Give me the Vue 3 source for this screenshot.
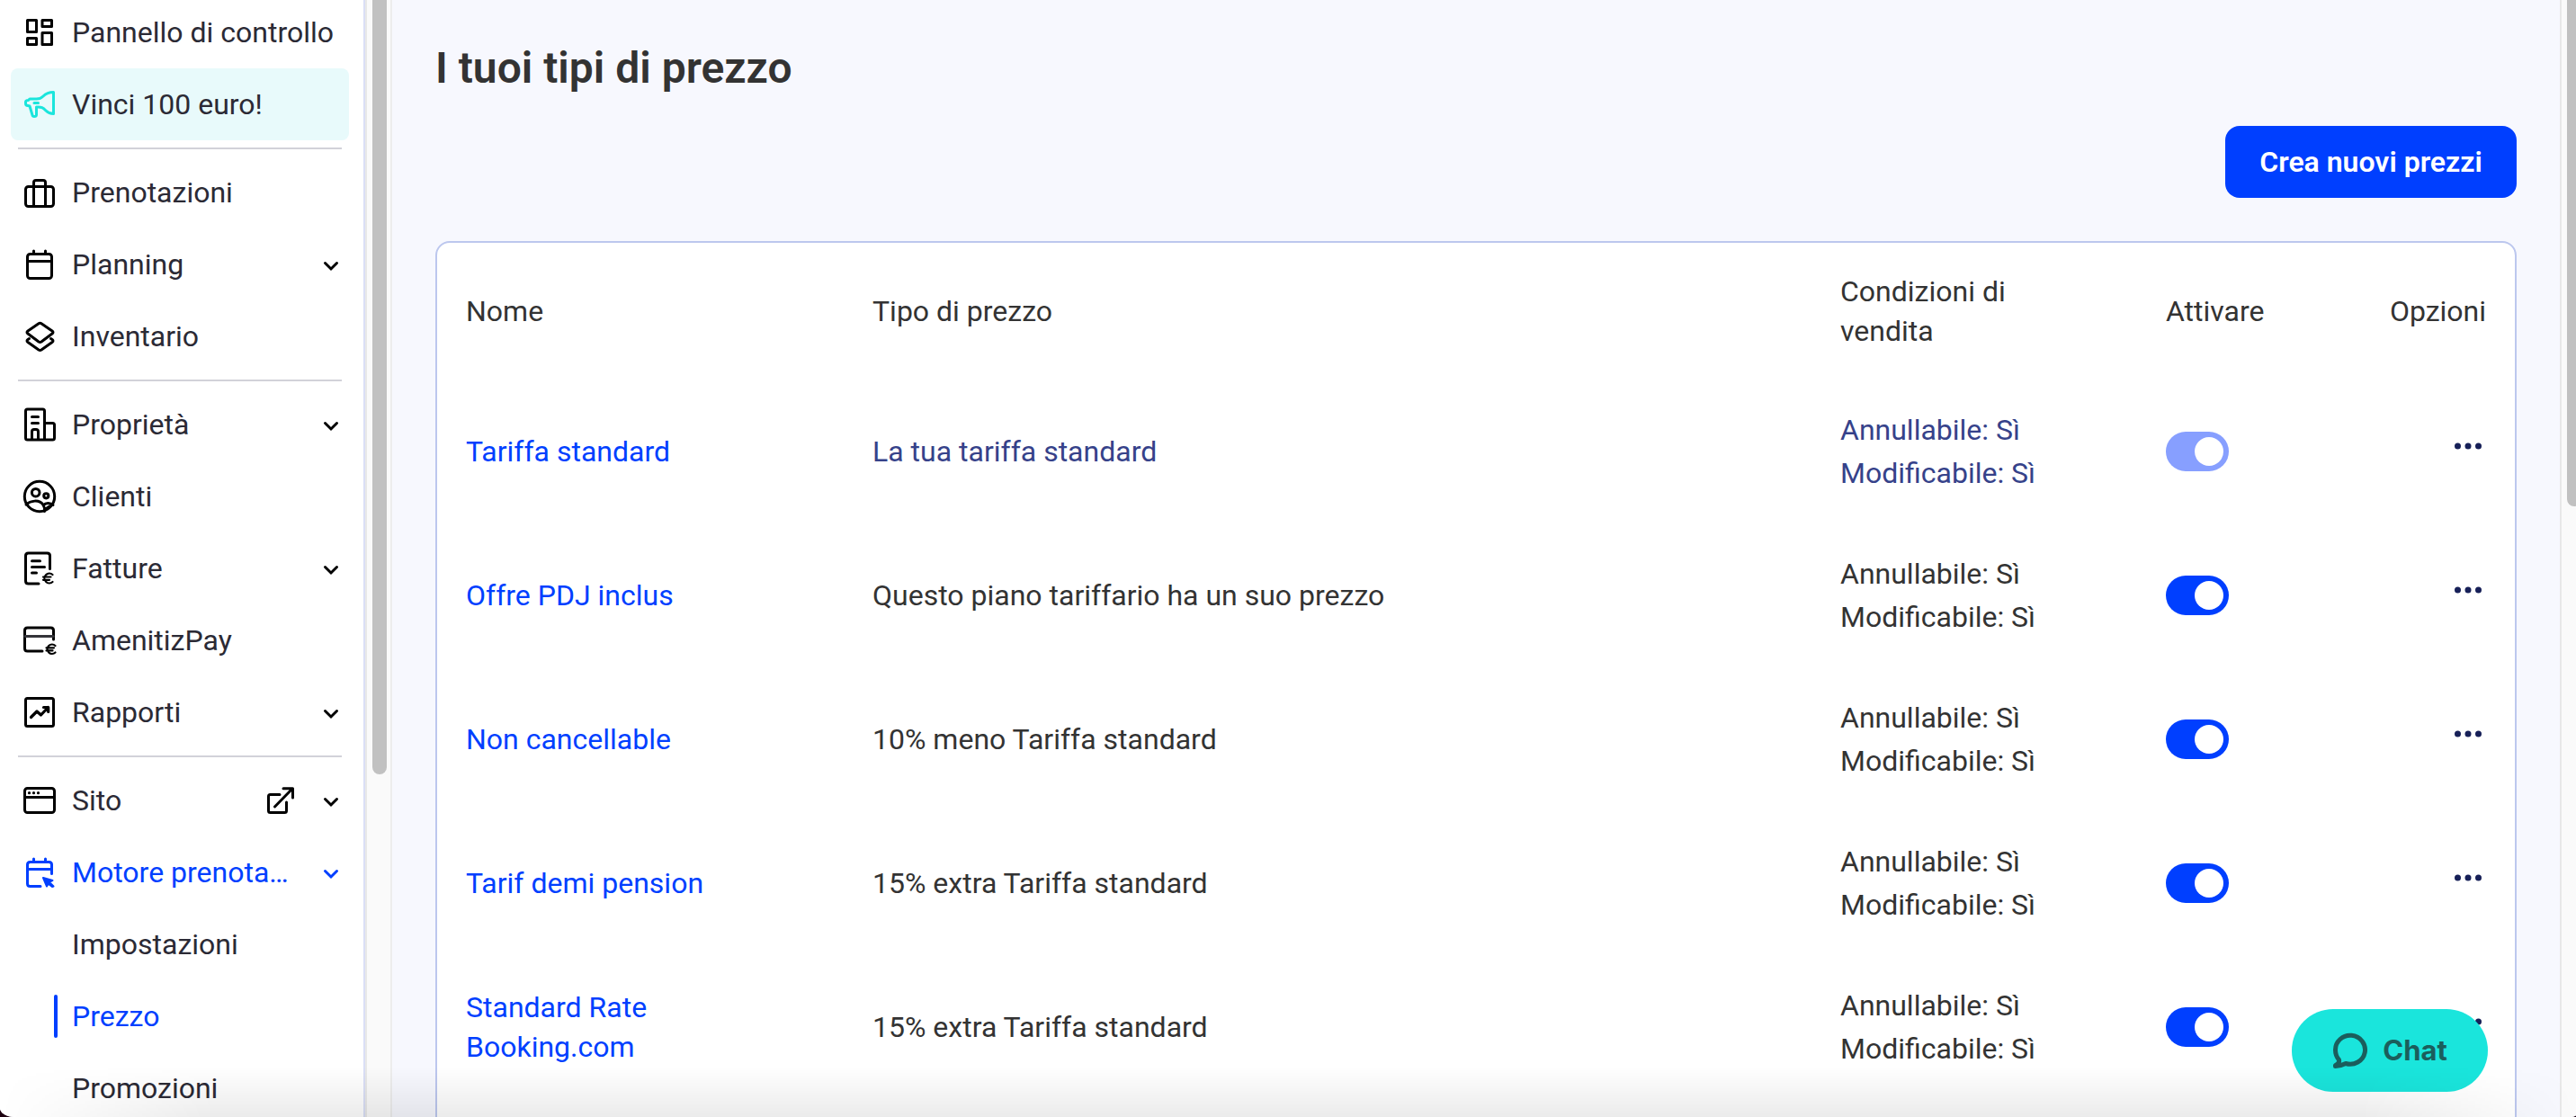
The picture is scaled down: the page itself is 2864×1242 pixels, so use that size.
<script setup>
import { ref } from 'vue'

const groups = [
  [
    { label: 'Pannello di controllo', icon: 'dashboard' },
    { label: 'Vinci 100 euro!', icon: 'megaphone', promo: true },
  ],
  [
    { label: 'Prenotazioni', icon: 'suitcase' },
    { label: 'Planning', icon: 'calendar', expandable: true },
    { label: 'Inventario', icon: 'layers' },
  ],
  [
    { label: 'Proprietà', icon: 'building', expandable: true },
    { label: 'Clienti', icon: 'people' },
    { label: 'Fatture', icon: 'invoice', expandable: true },
    { label: 'AmenitizPay', icon: 'card' },
    { label: 'Rapporti', icon: 'chart', expandable: true },
  ],
  [
    { label: 'Sito', icon: 'browser', expandable: true, external: true },
    { label: 'Motore prenota…', icon: 'booking', expandable: true, active: true },
    { label: 'Impostazioni', child: true },
    { label: 'Prezzo', child: true, active: true, current: true },
    { label: 'Promozioni', child: true },
  ],
]

const icons = {
  dashboard:
    '<path d="M6.5 6.5h10v13h-10zM23 6.5h10.500v7h-10.500zM6.500 26.500h10v7h-10zM23 20.500h10.500v13h-10.500z"/>',
  megaphone:
    '<path d="M35.500 6.500C30 6.500 27 8 24 11C21 14 19 14.500 15 14H9L7.500 15.500C5 15.500 4.500 16 4.500 17.500V19C4.500 21 5.500 21.500 7 21.500L9 22L12 32C12.300 33.500 13 33.500 14 33.500C16 33.500 16.500 33 16.500 31.500V23C22 22.500 24 24 27 27C29.500 29.500 32 30.500 35.500 30.500Z"/><path d="M14 18.500H18.500"/>',
  suitcase:
    '<rect x="4.500" y="13.500" width="31" height="22" rx="3"/><path d="M13.500 35.500V9q0-2.500 2.500-2.500h8q2.500 0 2.500 2.500V35.500"/>',
  calendar:
    '<rect x="6.500" y="8.500" width="27" height="27" rx="3"/><path d="M6.500 16.500h27M13.500 5v3M26.500 5v3"/>',
  layers:
    '<path d="M19 5.700q1.500-1 3 0L34 14q2 1.500 0 3L22 26q-1.500 1-3 0L7 17q-2-1.500 0-3z"/><path d="M8.500 22.500L7 23.500q-2 1.500 0 3L19 35q1.500 1 3 0L34 26.500q2-1.500 0-3L32.500 22.500"/>',
  building:
    '<path d="M25.500 37H6.500q-2 0-2-2V5q0-2 2-2h17q2 0 2 2V37zM25.500 18.500h9q2 0 2 2V35q0 2-2 2h-9M11.500 11.500h7M11.500 18.500h7M11.500 36.500V28q0-2.500 2.500-2.500h2q2.500 0 2.500 2.500v8.500"/>',
  people:
    '<circle cx="20" cy="20" r="16.700"/><circle cx="15.700" cy="15.700" r="4.300"/><circle cx="27.300" cy="19.300" r="2.600"/><path d="M5 29C9.500 25 19.500 22.500 24 29.500C25.700 32 26 34 25.500 36.500M24.500 29.500C27 26.500 32 27 35 29.500M26 34.500L31 31"/>',
  invoice:
    '<path d="M19 37H7.500q-3 0-3-3V6q0-3 3-3h21q3 0 3 3V20.500M11.500 11.700H20.500M11.500 18.500H25.500M11.500 25H16.500"/><path stroke-width="2.200" d="M34.500 27A5.400 5.400 0 1 0 34.500 35M24 29.500H32.500M24 32.800H31"/>',
  card:
    '<path d="M23 32H6.500q-3 0-3-3V9q0-3 3-3h26q3 0 3 3V19"/><path d="M4 15.500H35" stroke="#34343a"/><path stroke-width="2.200" d="M37.500 26A5.200 5.200 0 1 0 37.500 33.500M27.500 28.300H36M27.500 31.400H34.500"/>',
  chart:
    '<rect x="4.500" y="4.500" width="31" height="31" rx="2"/><path d="M10.500 25.500L17 19L21.500 23L29.500 14.500M24.500 14.500H29.700V19.500" stroke-width="3.200"/>',
  browser:
    '<rect x="3.500" y="6.500" width="33" height="27" rx="3"/><path d="M4 16.500H36"/><g fill="currentColor" stroke="none"><circle cx="8.500" cy="11.700" r="1.600"/><circle cx="13.500" cy="11.700" r="1.600"/><circle cx="18.500" cy="11.700" r="1.600"/></g>',
  booking:
    '<path d="M21 35.500H9.500q-3 0-3-3V11.500q0-3 3-3h21q3 0 3 3V21.500M6.500 16.500h27M13.500 5v3M26.500 5v3"/><path d="M24 26L34.500 29L31 31L35.500 35.500L34 36L29.500 32.500L28 35.500Z" fill="currentColor" stroke-width="2"/>',
  external:
    '<path d="M19 13.500H8.500q-2 0-2 2V31.500q0 2 2 2H24.500q2 0 2-2V22M13.500 27L33 7M23 6.700H33.500V17"/>',
}

const rates = ref([
  { name: 'Tariffa standard', type: 'La tua tariffa standard', enabled: true, base: true },
  { name: 'Offre PDJ inclus', type: 'Questo piano tariffario ha un suo prezzo', enabled: true },
  { name: 'Non cancellable', type: '10% meno Tariffa standard', enabled: true },
  { name: 'Tarif demi pension', type: '15% extra Tariffa standard', enabled: true },
  { name: 'Standard Rate Booking.com', type: '15% extra Tariffa standard', enabled: true },
])
</script>

<template>
  <div class="app">
    <nav class="sidebar">
      <ul v-for="(group, g) in groups" :key="g" class="group">
        <li v-for="item in group" :key="item.label">
          <a
            href="#"
            class="item"
            :class="{ promo: item.promo, active: item.active, child: item.child, current: item.current }"
          >
            <svg v-if="item.icon" class="icon" viewBox="0 0 40 40" aria-hidden="true" v-html="icons[item.icon]"></svg>
            <span class="label">{{ item.label }}</span>
            <svg v-if="item.external" class="icon external" viewBox="0 0 40 40" aria-hidden="true" v-html="icons.external"></svg>
            <svg v-if="item.expandable" class="chevron" viewBox="0 0 24 24" aria-hidden="true">
              <path d="M5.500 10.500L12 17L18.500 10.500" />
            </svg>
          </a>
        </li>
      </ul>
    </nav>
    <div class="track side-track"><div class="thumb"></div></div>

    <main class="main">
      <h1>I tuoi tipi di prezzo</h1>
      <div class="actions">
        <button type="button" class="create">Crea nuovi prezzi</button>
      </div>
      <section class="panel">
        <table>
          <colgroup>
            <col class="col-name" />
            <col />
            <col class="col-terms" />
            <col class="col-toggle" />
            <col class="col-options" />
          </colgroup>
          <thead>
            <tr>
              <th scope="col">Nome</th>
              <th scope="col">Tipo di prezzo</th>
              <th scope="col" class="terms-head">Condizioni di vendita</th>
              <th scope="col">Attivare</th>
              <th scope="col" class="options">Opzioni</th>
            </tr>
          </thead>
          <tbody>
            <tr v-for="rate in rates" :key="rate.name" :class="{ base: rate.base }">
              <td class="name"><a href="#">{{ rate.name }}</a></td>
              <td>{{ rate.type }}</td>
              <td class="terms">
                <div>Annullabile: Sì</div>
                <div>Modificabile: Sì</div>
              </td>
              <td>
                <input
                  v-model="rate.enabled"
                  type="checkbox"
                  class="switch"
                  :disabled="rate.base"
                  :aria-label="'Attivare ' + rate.name"
                />
              </td>
              <td class="options">
                <button type="button" class="more" :aria-label="'Opzioni ' + rate.name">
                  <svg viewBox="0 0 30 8" aria-hidden="true">
                    <circle cx="3.500" cy="4" r="3.500" />
                    <circle cx="15" cy="4" r="3.500" />
                    <circle cx="26.500" cy="4" r="3.500" />
                  </svg>
                </button>
              </td>
            </tr>
          </tbody>
        </table>
      </section>
    </main>
    <div class="track page-track"><div class="thumb"></div></div>

    <button type="button" class="chat">
      <svg viewBox="0 0 40 42" aria-hidden="true">
        <path d="M3.500 37.500C7 36 8 34 7.500 31.500C4.500 28 3.500 25 3.500 20.500A16.500 16 0 1 1 15 35.500C11 37.500 8 38.500 3.500 38.500Z" />
      </svg>
      <span>Chat</span>
    </button>
    <div class="edge-shade"></div>
  </div>
</template>

<style>
html {
  background: #1c0010;
}
body {
  margin: 0;
}
</style>

<style scoped>
.app {
  position: relative;
  display: flex;
  height: 100vh;
  overflow: hidden;
  border-radius: 0 0 8px 16px / 0 0 2px 10px;
  background: #f7f8fe;
  color: #333;
  font: 400 32px/44px Roboto, 'Liberation Sans', sans-serif;
}
a {
  color: inherit;
  text-decoration: none;
}

.sidebar {
  flex: none;
  box-sizing: border-box;
  width: 406px;
  border-right: 2px solid #dadff6;
  background: #fff;
  overflow: hidden;
}
.group {
  margin: 0;
  padding: 0;
  list-style: none;
}
/* the menu is scrolled down slightly */
.group:first-child {
  margin-top: -4px;
}
.group + .group::before {
  content: '';
  display: block;
  height: 2px;
  margin: 8px 24px 8px 20px;
  background: #d2d2d9;
}
.item {
  display: flex;
  align-items: center;
  box-sizing: border-box;
  height: 80px;
  margin: 0 16px 0 12px;
  padding: 0 8px 0 12px;
  border-radius: 8px;
  color: #2b2a35;
  white-space: nowrap;
}
.promo {
  background: #e8fafb;
}
.active {
  color: #003fff;
}
.icon {
  flex: none;
  width: 40px;
  height: 40px;
  margin-right: 16px;
  color: #000;
  fill: none;
  stroke: currentColor;
  stroke-width: 3;
  stroke-linecap: round;
  stroke-linejoin: round;
}
.promo .icon {
  color: #1ae5dc;
}
.active .icon {
  color: #003fff;
}
.label {
  flex: 1;
}
.external {
  margin-right: 24px;
}
.chevron {
  flex: none;
  width: 24px;
  height: 24px;
  fill: none;
  stroke: #000;
  stroke-width: 3;
  stroke-linecap: round;
}
.active .chevron {
  stroke: #003fff;
}
.child {
  padding-left: 68px;
}
.current {
  padding-left: 48px;
}
.current::before {
  content: '';
  width: 4px;
  height: 48px;
  margin-right: 16px;
  border-radius: 2px;
  background: #003fff;
}

.track {
  flex: none;
  box-sizing: border-box;
  border-left: 2px solid #e8e8e8;
  background: #fafafa;
}
.side-track {
  width: 30px;
  padding: 0 4px 0 6px;
  border-right: 2px solid #ededed;
}
.page-track {
  width: 18px;
  padding-left: 6px;
}
.thumb {
  width: 16px;
  height: 70%;
  margin-top: -8px;
  border-radius: 8px;
  background: #c1c1c1;
}
.page-track .thumb {
  height: 46%;
}

.main {
  flex: 1;
  min-width: 0;
  padding: 44px 48px 0;
}
h1 {
  margin: 0 0 32px;
  font-size: 48px;
  line-height: 64px;
  font-weight: 600;
}
.actions {
  display: flex;
  justify-content: flex-end;
  margin-bottom: 48px;
}
.create {
  min-width: 324px;
  height: 80px;
  padding: 0 32px;
  border: 0;
  border-radius: 16px;
  background: #003fff;
  color: #fff;
  font: inherit;
  font-weight: 600;
}
.panel {
  padding-bottom: 64px;
  border: 2px solid #bcc7ee;
  border-radius: 16px;
  background: #fff;
}
table {
  width: 100%;
  border-collapse: collapse;
  table-layout: fixed;
}
.col-name {
  width: 452px;
}
.col-terms {
  width: 362px;
}
.col-toggle,
.col-options {
  width: 210px;
}
th,
td {
  box-sizing: border-box;
  padding: 0 32px;
  text-align: left;
  vertical-align: middle;
  font-weight: 400;
}
th {
  height: 152px;
}
td {
  height: 160px;
}
.terms-head,
.name {
  padding-right: 96px;
}
.name {
  color: #003fff;
}
.terms {
  line-height: 48px;
}
.base td:not(.name) {
  color: #36428a;
}
.options {
  text-align: right;
}
.switch {
  appearance: none;
  display: flex;
  align-items: center;
  box-sizing: border-box;
  width: 70px;
  height: 44px;
  margin: 0;
  padding: 6px;
  border-radius: 22px;
  background: #b8bccb;
}
.switch::before {
  content: '';
  width: 32px;
  height: 32px;
  border-radius: 50%;
  background: #fff;
}
.switch:checked {
  justify-content: flex-end;
  background: #003fff;
}
.switch:disabled {
  background: #879fff;
}
.more {
  display: inline-flex;
  padding: 0 5px 18px;
  border: 0;
  background: none;
  vertical-align: middle;
}
.more svg {
  width: 30px;
  height: 8px;
  fill: #172058;
}

.chat {
  position: absolute;
  right: 98px;
  bottom: 28px;
  display: flex;
  align-items: center;
  justify-content: center;
  gap: 16px;
  width: 218px;
  height: 92px;
  border: 0;
  border-radius: 46px;
  background: #1ae5dc;
  color: #1b5e5c;
  font: 700 31px/44px Inter, sans-serif;
}
.chat svg {
  width: 40px;
  height: 42px;
  fill: none;
  stroke: currentColor;
  stroke-width: 5;
  stroke-linejoin: round;
}
.edge-shade {
  position: absolute;
  inset: auto 0 0;
  height: 56px;
  background: linear-gradient(transparent, rgba(0, 0, 0, 0.08));
  mask-image: linear-gradient(90deg, transparent, #000 240px, #000 calc(100% - 240px), transparent);
  pointer-events: none;
}
</style>
